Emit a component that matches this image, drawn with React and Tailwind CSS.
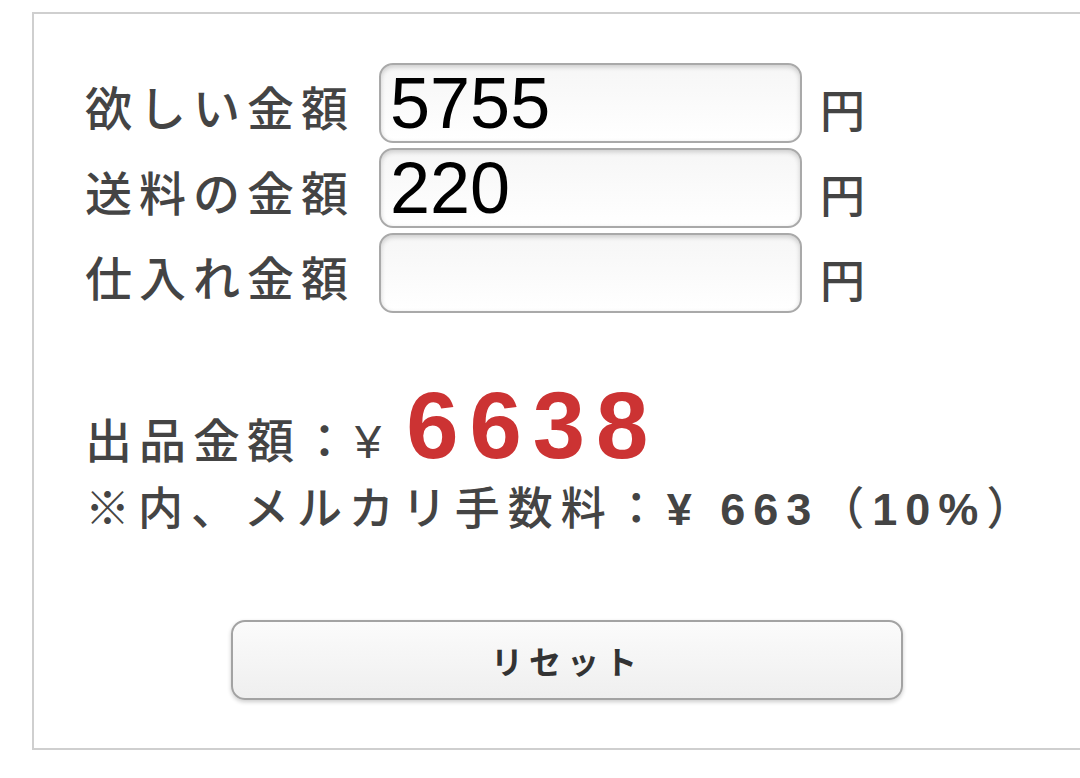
import React, { useState } from "react";

const jp = "font-['Liberation_Sans','Noto_Sans_CJK_JP_Medium','Noto_Sans_CJK_JP',sans-serif]";

const Row = ({ label, name, value, onChange }) => (
  <div className="flex items-center">
    <label className="w-[294px] shrink-0 pt-3 text-[47px] leading-none font-medium tracking-[7px] text-[#444]">
      {label}
    </label>
    <input
      type="text"
      name={name}
      value={value}
      onChange={onChange}
      className="w-[423px] h-[80px] shrink-0 rounded-[14px] border-2 border-[#a9a9a9] bg-gradient-to-b from-[#f6f6f6] to-white px-[9px] text-[72px] leading-none text-black shadow-[inset_0_2px_5px_rgba(0,0,0,0.18)] outline-none"
    />
    <span className="ml-[18px] pt-[18px] text-[45px] leading-none font-medium text-[#444]">円</span>
  </div>
);

export default function App() {
  const [form, setForm] = useState({ hoshii: "5755", souryou: "220", shiire: "" });

  const handleChange = (e) => {
    const { name, value } = e.target;
    setForm({ ...form, [name]: value });
  };

  const total =
    (Number(form.hoshii) || 0) + (Number(form.souryou) || 0) + (Number(form.shiire) || 0);
  const price = Math.floor(total / 0.9);
  const fee = Math.floor(price * 0.1);

  return (
    <div className={`w-[1080px] h-[778px] overflow-hidden bg-white ${jp}`}>
      <div className="ml-[32px] mt-[12px] w-[1100px] border-2 border-[#cfcfcf] pl-[51px] pt-[49px] pb-[48px]">
        <div className="flex flex-col gap-[5px]">
          <Row label="欲しい金額" name="hoshii" value={form.hoshii} onChange={handleChange} />
          <Row label="送料の金額" name="souryou" value={form.souryou} onChange={handleChange} />
          <Row label="仕入れ金額" name="shiire" value={form.shiire} onChange={handleChange} />
        </div>

        {/* 結果 */}
        <div className="mt-[66px] flex items-baseline text-[#444]">
          <span className="text-[47px] leading-none font-medium tracking-[7px]">出品金額：¥</span>
          <span className="ml-[18px] text-[94px] leading-none font-bold tracking-[11px] text-[#cc3333]">
            {price}
          </span>
        </div>
        <div className="mt-[14px] text-[45px] leading-none font-medium tracking-[8px] text-[#444]">
          ※内、メルカリ手数料：<span className="font-bold">¥ {fee}</span>（<span className="font-bold">10%</span>）
        </div>

        <div className="mt-[88px] pl-[146px]">
          <button
            type="button"
            onClick={() => setForm({ hoshii: "", souryou: "", shiire: "" })}
            className="w-[672px] h-[80px] rounded-[14px] border-2 border-[#a3a3a3] bg-gradient-to-b from-[#fbfbfb] to-[#efefef] font-['Noto_Sans_CJK_JP',sans-serif] text-[32px] font-bold tracking-[6px] text-[#333] shadow-[0_2px_4px_rgba(0,0,0,0.2)]"
          >
            リセット
          </button>
        </div>
      </div>
    </div>
  );
}
